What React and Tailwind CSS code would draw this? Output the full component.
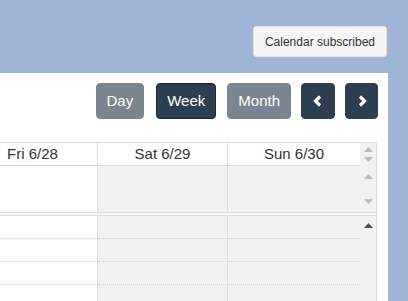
import React from 'react';

const days = ['Fri 6/28', 'Sat 6/29', 'Sun 6/30'];
const colW = ['w-[130px] ml-[-32px]', 'w-[130px]', 'w-[132px]'];

const Arrow = ({ dir = 'up', color = '#bbbbbb' }) => (
  <svg width="9" height="5" viewBox="0 0 9 5">
    {dir === 'up' ? (
      <polygon points="0,5 4.5,0 9,5" fill={color} />
    ) : (
      <polygon points="0,0 4.5,5 9,0" fill={color} />
    )}
  </svg>
);

const ViewButton = ({ label, active, className = '' }) => (
  <button
    className={`h-[36px] px-[10px] rounded-[4px] text-[15px] text-white border ${
      active ? 'bg-[#2c3e50] border-[#1a252f]' : 'bg-[#7b8591] border-[#7b8591]'
    } ${className}`}
  >
    {label}
  </button>
);

const NavButton = ({ children, className = '' }) => (
  <button
    className={`h-[36px] rounded-[4px] bg-[#2c3e50] border border-[#2c3e50] flex items-center justify-center ${className}`}
  >
    {children}
  </button>
);

export default function App() {
  return (
    <div
      className="w-[408px] h-[301px] overflow-hidden bg-[#a0b4d5] flex flex-col"
      style={{ fontFamily: '"Liberation Sans", Arial, sans-serif' }}
    >
      {/* top bar */}
      <div className="h-[73px] shrink-0 flex justify-end items-start pt-[26px] pr-[21px]">
        <button className="h-[31px] px-[11px] bg-[#f5f5f5] border border-[#e0e0e0] rounded-[3px] text-[12px] text-[#333]">
          Calendar subscribed
        </button>
      </div>

      {/* panel */}
      <div className="w-[388px] flex-1 min-h-0 bg-white flex flex-col">
        <div className="flex justify-end items-center pt-[10px] pr-[10px]">
          <ViewButton label="Day" />
          <ViewButton label="Week" active className="ml-[12px]" />
          <ViewButton label="Month" className="ml-[11px]" />
          <NavButton className="ml-[10px] w-[34px]">
            <svg width="10" height="12" viewBox="0 0 10 12">
              <polyline points="7,1.5 2.5,6 7,10.5" fill="none" stroke="white" strokeWidth="3.2" />
            </svg>
          </NavButton>
          <NavButton className="ml-[10px] w-[33px]">
            <svg width="10" height="12" viewBox="0 0 10 12">
              <polyline points="3,1.5 7.5,6 3,10.5" fill="none" stroke="white" strokeWidth="3.2" />
            </svg>
          </NavButton>
        </div>

        {/* calendar grid */}
        <div className="mt-[23px] w-[377px] border-t border-r border-[#dddddd] overflow-hidden text-[15px] text-[#333]">
          {/* header */}
          <div className="flex h-[23px]">
            {days.map((d, i) => (
              <div
                key={d}
                className={`${colW[i]} shrink-0 h-full flex items-center justify-center border-r border-b border-[#dddddd] ${
                  i === 2 ? 'border-r-0' : ''
                }`}
              >
                {d}
              </div>
            ))}
            <div className="flex-1 bg-[#f1f1f1] flex flex-col items-center justify-center gap-[5px]">
              <Arrow dir="up" />
              <Arrow dir="down" />
            </div>
          </div>

          {/* all-day row */}
          <div className="flex h-[47px] border-b border-[#dddddd]">
            {days.map((d, i) => (
              <div
                key={d}
                className={`${colW[i]} shrink-0 h-full border-r border-[#dddddd] ${
                  i === 0 ? 'bg-white' : 'bg-[#f1f1f1]'
                } ${i === 2 ? 'border-r-0' : ''}`}
              />
            ))}
            <div className="flex-1 bg-[#f1f1f1] flex flex-col items-center justify-between py-[8px]">
              <Arrow dir="up" />
              <Arrow dir="down" />
            </div>
          </div>
          <div className="h-[2px] bg-[#f7f7f7] border-b border-[#dddddd] box-content" />

          {/* body */}
          <div className="flex">
            <div className="flex flex-col">
              {[0, 1, 2, 3].map((r) => (
                <div key={r} className="flex h-[23px]">
                  {days.map((d, i) => (
                    <div
                      key={d}
                      className={`${colW[i]} shrink-0 h-full border-r border-b border-dotted border-[#dddddd] ${
                        i === 0 ? 'bg-white' : 'bg-[#f1f1f1]'
                      } ${i === 2 ? 'border-r-0' : ''}`}
                      style={{ borderRightStyle: 'solid', borderBottomColor: '#cfcfcf' }}
                    />
                  ))}
                </div>
              ))}
            </div>
            <div className="flex-1 bg-[#f1f1f1] flex justify-center pt-[7px]">
              <Arrow dir="up" color="#505050" />
            </div>
          </div>
        </div>
      </div>
    </div>
  );
}
